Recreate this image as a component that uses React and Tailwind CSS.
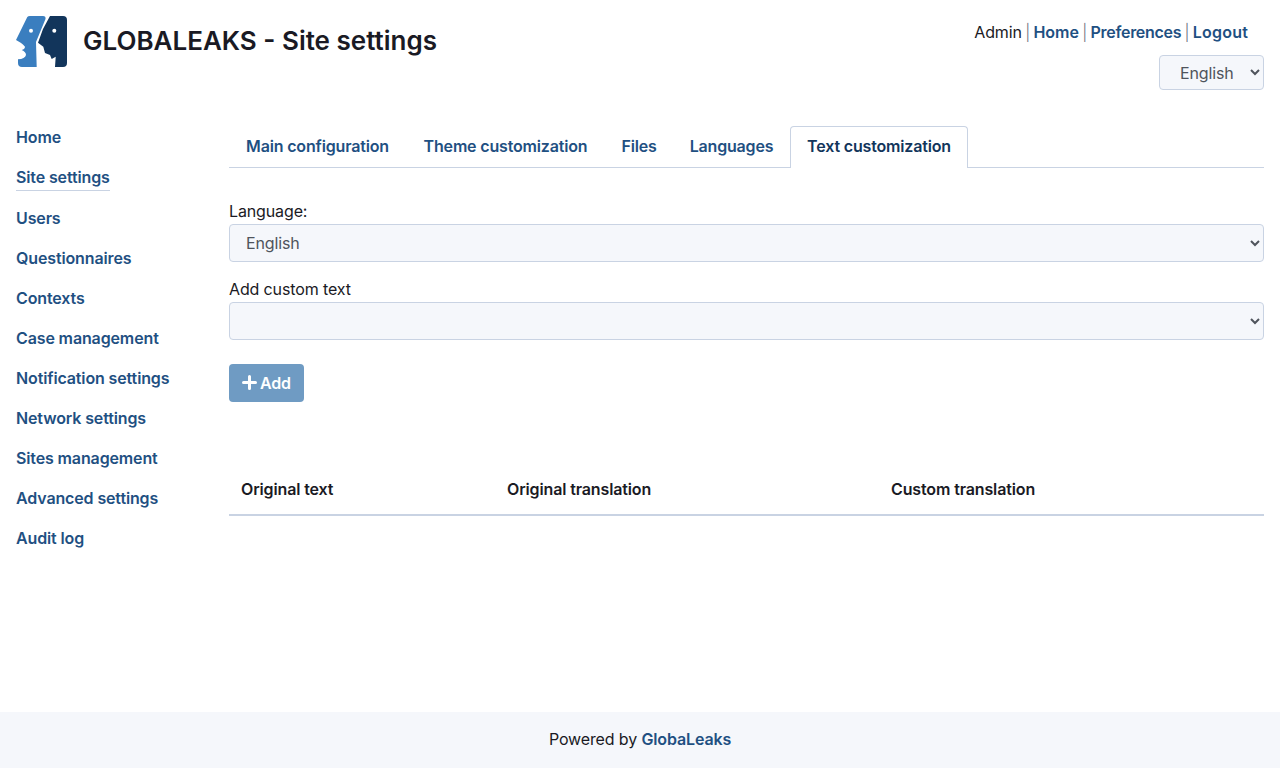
import React from 'react';

const menu = [
  'Home',
  'Site settings',
  'Users',
  'Questionnaires',
  'Contexts',
  'Case management',
  'Notification settings',
  'Network settings',
  'Sites management',
  'Advanced settings',
  'Audit log',
];

const tabs = [
  { label: 'Main configuration', width: 'w-[177px]' },
  { label: 'Theme customization', width: 'w-[199px]' },
  { label: 'Files', width: 'w-[68px]' },
  { label: 'Languages', width: 'w-[117px]' },
];

const Logo = () => (
  <svg width="51" height="51" viewBox="0 0 51 51" className="shrink-0">
    <path
      d="M11.3 1 Q12 0 14 0 H27 Q30 0 29.5 3 L20 26 L20.7 51 H6 Q2 51 2 47 V43.3 Q9 43 10 39 Q10 36 5.7 34 Q9 33 9 30.7 Q7 28 4.7 26.7 L0 24 Z"
      fill="#3a7ebf"
    />
    <path
      d="M34 0 H47 Q51 0 51 4 V47 Q51 51 47 51 H39 L39.7 40.7 L35.7 43 L34 39 L29 37 L27.3 30.7 L22 26.7 L27 13 Z"
      fill="#12355b"
    />
    <circle cx="15" cy="14.7" r="2" fill="#ffffff" />
    <circle cx="38.3" cy="14.7" r="2" fill="#ffffff" />
  </svg>
);

const App = () => {
  return (
    <div className="min-h-[768px] flex flex-col bg-white text-[16px] text-[#1a1a24] font-['Inter','Liberation_Sans',sans-serif] tracking-[-0.13px]">
      {/* Header */}
      <header className="h-[102px] px-4 pt-4 flex justify-between">
        <div className="flex items-start gap-4">
          <Logo />
          <h1 className="text-[26px] leading-[50px] font-semibold tracking-normal">GLOBALEAKS - Site settings</h1>
        </div>
        <div className="flex flex-col items-end">
          <div className="h-[33px] pr-4 leading-[33px] text-[16px] [word-spacing:-1px]">
            Admin <span className="text-[#6b7280] font-light">|</span>{' '}
            <a className="font-semibold text-[#1f5082] tracking-normal">Home</a>{' '}
            <span className="text-[#6b7280] font-light">|</span>{' '}
            <a className="font-semibold text-[#1f5082] tracking-[-0.3px]">Preferences</a>{' '}
            <span className="text-[#6b7280] font-light">|</span>{' '}
            <a className="font-semibold text-[#1f5082] tracking-[0.2px]">Logout</a>
          </div>
          <select className="mt-[6px] w-[105px] h-[35px] pl-4 rounded border border-[#c9d3e3] bg-[#f5f7fb] text-[#4f545c] text-[16px]">
            <option>English</option>
          </select>
        </div>
      </header>

      <div className="flex flex-1 px-4">
        {/* Sidebar */}
        <nav className="w-[213px] shrink-0 pt-[23px] flex flex-col items-start gap-[16px]">
          {menu.map((item) => (
            <a
              key={item}
              className={
                'leading-[24px] font-semibold text-[#1f5082] ' +
                (item === 'Site settings' ? 'h-[26px] -mb-px border-b border-[#c9d3e3]' : 'h-[24px]')
              }
            >
              {item}
            </a>
          ))}
        </nav>

        {/* Main */}
        <main className="flex-1 pt-[24px]">
          <div className="flex h-[42px] border-b border-[#c9d3e3]">
            {tabs.map((tab) => (
              <a key={tab.label} className={tab.width + ' text-center leading-[40px] font-semibold text-[#1f5082] tracking-[-0.17px]'}>
                {tab.label}
              </a>
            ))}
            <a className="w-[178px] h-[42px] text-center leading-[38px] font-semibold text-[#12355b] bg-white border border-b-0 border-[#c9d3e3] rounded-t tracking-[-0.17px]">
              Text customization
            </a>
          </div>

          <label className="block mt-[32px] pb-px leading-[23px]">Language:</label>
          <select className="block w-full h-[38px] px-3 rounded border border-[#c9d3e3] bg-[#f5f7fb] text-[#4f545c]">
            <option>English</option>
          </select>

          <label className="block mt-[16px] pb-px leading-[23px]">Add custom text</label>
          <select className="block w-full h-[38px] px-3 rounded border border-[#c9d3e3] bg-[#f5f7fb] text-[#4f545c]">
            <option></option>
          </select>

          <button className="mt-[24px] h-[38px] w-[75px] pb-px flex items-center justify-center gap-[3px] rounded bg-[#6f9bc3] text-white font-semibold">
            <svg width="15" height="15" viewBox="0 0 15 15">
              <path d="M7.5 1.5 V13.5 M1.5 7.5 H13.5" stroke="#ffffff" strokeWidth="3" strokeLinecap="round" />
            </svg>
            Add
          </button>

          <table className="w-full mt-[62px] text-left">
            <thead>
              <tr className="h-[51px] border-b-2 border-[#c9d3e3]">
                <th className="w-[266px] px-3 font-semibold">Original text</th>
                <th className="w-[384px] px-3 font-semibold">Original translation</th>
                <th className="px-3 font-semibold">Custom translation</th>
              </tr>
            </thead>
          </table>
        </main>
      </div>

      {/* Footer */}
      <footer className="h-[56px] pb-[2px] bg-[#f5f7fb] flex items-center justify-center">
        <span>
          Powered by <a className="font-semibold text-[#1f5082]">GlobaLeaks</a>
        </span>
      </footer>
    </div>
  );
};

export default App;
